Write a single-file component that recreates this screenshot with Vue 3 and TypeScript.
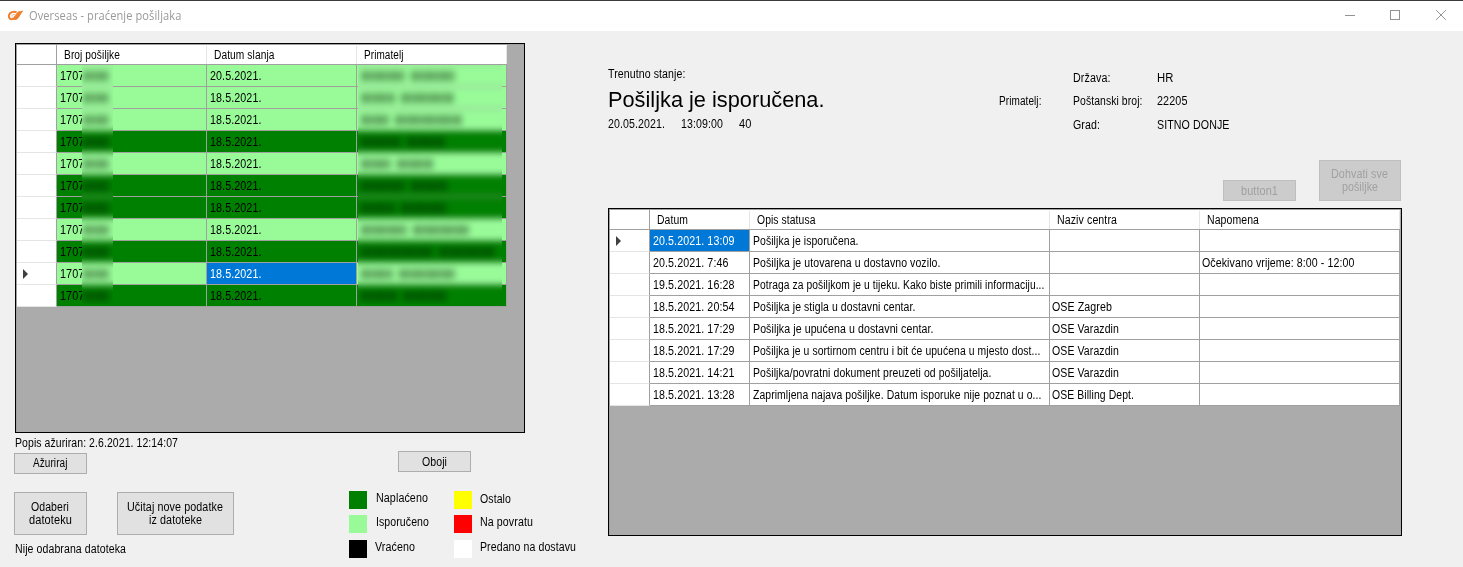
<script setup lang="ts">
type Label = [text: string, width: number]

interface Shipment {
  date: string
  paid: boolean
  words: number[]
}

interface StatusRow {
  date: Label
  text: Label
  center?: Label
  note?: Label
}

// Condenses the letters of an element so that its text takes the given width.
const vFit = {
  mounted(el: HTMLElement, binding: { value: number }) {
    const range = document.createRange()
    range.selectNodeContents(el)
    const natural = range.getBoundingClientRect().width
    el.style.display = 'inline-block'
    el.style.width = `${binding.value}px`
    el.style.transformOrigin = '0 50%'
    el.style.transform = `scaleX(${binding.value / natural})`
  },
}

const shipments: Shipment[] = [
  { date: '20.5.2021.', paid: false, words: [44, 44] },
  { date: '18.5.2021.', paid: false, words: [34, 53] },
  { date: '18.5.2021.', paid: false, words: [28, 67] },
  { date: '18.5.2021.', paid: true, words: [40, 38] },
  { date: '18.5.2021.', paid: false, words: [30, 36] },
  { date: '18.5.2021.', paid: true, words: [44, 36] },
  { date: '18.5.2021.', paid: true, words: [34, 46] },
  { date: '18.5.2021.', paid: false, words: [46, 56] },
  { date: '18.5.2021.', paid: true, words: [72, 56] },
  { date: '18.5.2021.', paid: false, words: [32, 56] },
  { date: '18.5.2021.', paid: true, words: [36, 44] },
]
const current = 9

const shipmentHeads: Label[] = [['Broj pošiljke', 56], ['Datum slanja', 60.5], ['Primatelj', 39.5]]
const statusHeads: Label[] = [['Datum', 31], ['Opis statusa', 58.5], ['Naziv centra', 60], ['Napomena', 52]]

const statuses: StatusRow[] = [
  { date: ['20.5.2021. 13:09', 81.5], text: ['Pošiljka je isporučena.', 105.5] },
  { date: ['20.5.2021. 7:46', 75.5], text: ['Pošiljka je utovarena u dostavno vozilo.', 187.5], note: ['Očekivano vrijeme: 8:00 - 12:00', 152.5] },
  { date: ['19.5.2021. 16:28', 81.5], text: ['Potraga za pošiljkom je u tijeku. Kako biste primili informaciju...', 291.5] },
  { date: ['18.5.2021. 20:54', 81.5], text: ['Pošiljka je stigla u dostavni centar.', 162.5], center: ['OSE Zagreb', 60] },
  { date: ['18.5.2021. 17:29', 81.5], text: ['Pošiljka je upućena u dostavni centar.', 180.5], center: ['OSE Varazdin', 67] },
  { date: ['18.5.2021. 17:29', 81.5], text: ['Pošiljka je u sortirnom centru i bit će upućena u mjesto dost...', 287.5], center: ['OSE Varazdin', 67] },
  { date: ['18.5.2021. 14:21', 81.5], text: ['Pošiljka/povratni dokument preuzeti od pošiljatelja.', 238.5], center: ['OSE Varazdin', 67] },
  { date: ['18.5.2021. 13:28', 81.5], text: ['Zaprimljena najava pošiljke. Datum isporuke nije poznat u o...', 288.5], center: ['OSE Billing Dept.', 82] },
]

const legend: { name: string; label: Label }[][] = [
  [
    { name: 'paid', label: ['Naplaćeno', 52] },
    { name: 'delivered', label: ['Isporučeno', 53] },
    { name: 'returned', label: ['Vraćeno', 40] },
  ],
  [
    { name: 'other', label: ['Ostalo', 31] },
    { name: 'returning', label: ['Na povratu', 53] },
    { name: 'handed', label: ['Predano na dostavu', 96] },
  ],
]
</script>

<template>
  <div class="window">
    <header class="titlebar">
      <svg class="logo" width="17" height="12" viewBox="0 0 17 12">
        <path d="M9.6 2.3C6.4 .9 3 2.2 2 5C1.3 7.8 3 9.5 5.4 9.1C8.6 8.4 9.6 3.2 12.6 2" fill="none" stroke="#ee8030" stroke-width="2" />
        <path d="M16.4 .6L12 1.4L9 5.6L6 9.4C6.8 10.4 9 10.4 10.6 9C12.8 7 13.6 3.8 16.4 .6Z" fill="#ee8030" />
        <path d="M4.8 6.6C5.2 4.9 6.4 4.2 7.8 4.5" fill="none" stroke="#f3a566" stroke-width="1" />
      </svg>
      <span v-fit="152.5" class="title">Overseas - praćenje pošiljaka</span>
      <svg class="controls" width="103" height="12" viewBox="0 0 103 12" fill="none" stroke="#929292">
        <path d="M0 6.5H10" />
        <rect x="45.5" y="1.5" width="9" height="9" />
        <path d="M91.2 1.2L100.8 10.8M100.8 1.2L91.2 10.8" />
      </svg>
    </header>

    <main class="content">
      <section class="left">
        <div class="sheet shipments">
          <div class="row head">
            <span class="cell" />
            <span v-for="h in shipmentHeads" :key="h[0]" class="cell"><span v-fit="h[1]">{{ h[0] }}</span></span>
          </div>
          <div v-for="(s, i) in shipments" :key="i" class="row" :class="s.paid ? 'paid' : 'delivered'">
            <span class="cell marker"><i v-if="i === current" /></span>
            <span class="cell"><span v-fit="24.5">1707</span></span>
            <span class="cell" :class="{ selected: i === current }"><span v-fit="51.5">{{ s.date }}</span></span>
            <span class="cell" />
          </div>
          <div class="veil numbers">
            <div class="haze">
              <div v-for="(s, i) in shipments" :key="i" class="band" :class="s.paid ? 'paid' : 'delivered'">
                <b class="word digits" />
              </div>
            </div>
          </div>
          <div class="veil names">
            <div class="haze">
              <div v-for="(s, i) in shipments" :key="i" class="band" :class="s.paid ? 'paid' : 'delivered'">
                <b v-for="(w, k) in s.words" :key="k" class="word" :style="{ width: w + 'px' }" />
              </div>
            </div>
          </div>
        </div>

        <div class="updated"><span v-fit="163">Popis ažuriran: 2.6.2021. 12:14:07</span></div>
        <div class="actions">
          <button class="btn refresh"><span v-fit="34.5">Ažuriraj</span></button>
          <button class="btn paint"><span v-fit="25">Oboji</span></button>
        </div>
        <div class="bottom">
          <div class="files">
            <div class="file-buttons">
              <button class="btn pick"><span v-fit="38">Odaberi</span><span v-fit="43">datoteku</span></button>
              <button class="btn load"><span v-fit="96">Učitaj nove podatke</span><span v-fit="53">iz datoteke</span></button>
            </div>
            <div class="file-name"><span v-fit="111">Nije odabrana datoteka</span></div>
          </div>
          <div v-for="(group, g) in legend" :key="g" class="legend">
            <div v-for="l in group" :key="l.name" class="entry" :class="'entry-' + l.name">
              <i class="swatch" :class="l.name" /><span v-fit="l.label[1]">{{ l.label[0] }}</span>
            </div>
          </div>
        </div>
      </section>

      <section class="right">
        <div class="info">
          <div class="state">
            <div><span v-fit="77.5">Trenutno stanje:</span></div>
            <h1><span v-fit="216.5">Pošiljka je isporučena.</span></h1>
            <div class="when">
              <span v-fit="57">20.05.2021.</span><span v-fit="42">13:09:00</span><span v-fit="12.5">40</span>
            </div>
          </div>
          <div class="recipient"><span v-fit="42.5">Primatelj:</span></div>
          <div class="address">
            <div><span v-fit="37.5">Država:</span></div><div><span v-fit="16.5">HR</span></div>
            <div><span v-fit="69.5">Poštanski broj:</span></div><div><span v-fit="30.5">22205</span></div>
            <div><span v-fit="27">Grad:</span></div><div><span v-fit="72.5">SITNO DONJE</span></div>
          </div>
        </div>
        <div class="tools">
          <button class="btn small" disabled><span v-fit="37">button1</span></button>
          <button class="btn all" disabled><span v-fit="57">Dohvati sve</span><span v-fit="36">pošiljke</span></button>
        </div>
        <div class="sheet statuses">
          <div class="row head">
            <span class="cell" />
            <span v-for="h in statusHeads" :key="h[0]" class="cell"><span v-fit="h[1]">{{ h[0] }}</span></span>
          </div>
          <div v-for="(s, i) in statuses" :key="i" class="row">
            <span class="cell marker"><i v-if="i === 0" /></span>
            <span class="cell" :class="{ selected: i === 0 }"><span v-fit="s.date[1]">{{ s.date[0] }}</span></span>
            <span class="cell"><span v-fit="s.text[1]">{{ s.text[0] }}</span></span>
            <span class="cell tight"><span v-if="s.center" v-fit="s.center[1]">{{ s.center[0] }}</span></span>
            <span class="cell tight"><span v-if="s.note" v-fit="s.note[1]">{{ s.note[0] }}</span></span>
          </div>
        </div>
      </section>
    </main>
  </div>
</template>

<style>
body {
  margin: 0;
  overflow: hidden;
}
</style>

<style scoped>
.window {
  box-sizing: border-box;
  width: 1463px;
  height: 567px;
  overflow: hidden;
  border-top: 1px solid #3c3c3c;
  background: #f0f0f0;
  color: #000;
  font: 12px/14px "Liberation Sans", Arial, sans-serif;
  letter-spacing: 0.1px;
  white-space: nowrap;
}
.window * { box-sizing: border-box; }
.titlebar {
  display: flex;
  align-items: center;
  height: 30px;
  padding: 0 15px 0 7px;
  background: #fff;
}
.logo { margin-right: 5px; margin-top: -1px; }
.title {
  color: #999;
  font: 12px/16px "Open Sans", "Noto Sans", sans-serif;
}
.controls { margin-left: auto; margin-top: -2px; }
.content { display: flex; }
.left {
  flex: none;
  width: 608px;
  padding: 12px 0 0 14px;
}
.sheet {
  position: relative;
  border: 1px solid #000;
  background: #ababab;
  box-shadow: inset 1px 1px #a0a0a0;
  padding: 1px 0 0 1px;
}
.shipments { width: 510px; height: 390px; margin-left: 1px; }
.statuses { width: 794px; height: 328px; margin-top: 7px; }
.row { display: grid; height: 22px; }
.shipments .row { width: 490px; grid-template-columns: 40px 150px 150px 150px; }
.statuses .row { width: 790px; grid-template-columns: 40px 100px 300px 150px 200px; }
.cell {
  display: flex;
  align-items: center;
  padding-left: 3px;
  border-right: 1px solid #a0a0a0;
  border-bottom: 1px solid #a0a0a0;
  background: #fff;
  overflow: hidden;
}
.cell.tight { padding-left: 2px; }
.head { height: 20px; }
.head .cell {
  padding-left: 7px;
  border-right: 0;
  background: linear-gradient(#e5e5e5, #e5e5e5) right 1px / 1px 19px no-repeat #fff;
}
.statuses .head .cell { padding-left: 6.5px; }
.head .cell:first-child { border-right: 1px solid #a0a0a0; background: #fff; }
.row .marker {
  border-bottom-color: #e5e5e5;
  padding-left: 6px;
  background: #fff;
}
.marker i {
  border: solid transparent;
  border-width: 5px 0 5px 5px;
  border-left-color: #404040;
}
.row.paid .cell:not(.marker), .band.paid, .swatch.paid { background-color: #008000; }
.row.delivered .cell:not(.marker), .band.delivered, .swatch.delivered { background-color: #98fb98; }
.row .cell.selected:not(.marker) { background-color: #0078d7; color: #fff; }
.veil {
  position: absolute;
  top: 21px;
  height: 239px;
  overflow: hidden;
}
.numbers { left: 66px; width: 31px; }
.names { left: 342px; width: 144px; }
.haze { margin: 0 -12px; filter: blur(3px); }
.band {
  display: flex;
  align-items: center;
  gap: 6px;
  height: 22px;
  padding-left: 15px;
  border-bottom: 1px solid #a0a0a0;
}
.band:first-child { margin-top: -1px; height: 23px; border-top: 1px solid #a0a0a0; }
.band:last-child { height: 40px; padding-bottom: 18px; border: 0; }
.word {
  flex: none;
  height: 10px;
  background: repeating-linear-gradient(90deg, rgba(0, 20, 0, 0.38) 0 6px, rgba(0, 20, 0, 0.28) 6px 8px, rgba(0, 20, 0, 0.34) 8px 13px, rgba(0, 20, 0, 0.24) 13px 15px);
}
.digits { width: 26px; margin-left: -2px; }
.updated { margin: 3px 0 1px 1px; }
.updated, .file-name, .state > div, .address > div { height: 14px; }
.btn {
  display: flex;
  flex-direction: column;
  align-items: center;
  justify-content: center;
  width: 73px;
  height: 21px;
  margin: 0;
  padding: 0 1px 0 0;
  border: 1px solid #adadad;
  background: #e1e1e1;
  color: #000;
  font: inherit;
  letter-spacing: inherit;
  line-height: 13px;
  text-align: left;
}
.btn:disabled { background: #ccc; border-color: #bfbfbf; color: #a0a0a0; }
.actions { display: flex; height: 23px; }
.refresh { margin-top: 2px; }
.paint { margin-left: 311px; padding-top: 1px; }
.bottom { display: flex; margin-top: 17px; }
.files { width: 335px; padding-top: 1px; }
.file-buttons { display: flex; gap: 30px; }
.pick { height: 43px; }
.load { width: 117px; height: 43px; }
.file-name { margin: 7px 0 0 1px; }
.legend { width: 105px; }
.entry { display: flex; align-items: flex-start; height: 24px; gap: 9px; }
.entry-delivered, .entry-returning { height: 25px; }
.entry-other span { margin-top: 1px; }
.entry-returned { gap: 8px; }
.legend + .legend .entry { gap: 8px; }
.swatch { flex: none; width: 18px; height: 18px; }
.swatch.returned { background: #000; }
.swatch.other { background: #ff0; }
.swatch.returning { background: #f00; }
.swatch.handed { background: #fff; }
.right { flex: none; width: 794px; }
.info { display: flex; height: 129px; }
.state { width: 390.5px; padding-top: 36px; }
h1 {
  height: 23px;
  margin: 8px 0 5px;
  font-size: 21.5px;
  font-weight: 400;
  line-height: 23px;
  letter-spacing: 0;
}
.when { display: flex; gap: 16px; }
.recipient { width: 74.5px; padding-top: 63px; }
.address {
  display: grid;
  grid-template-columns: 84px 100px;
  grid-template-rows: 23px 24px 14px;
  align-content: start;
  padding-top: 40px;
}
.tools {
  display: flex;
  align-items: flex-end;
  justify-content: flex-end;
  gap: 23px;
  padding-right: 1px;
}
.small { padding-top: 1px; }
.all { width: 82px; height: 41px; }
</style>
